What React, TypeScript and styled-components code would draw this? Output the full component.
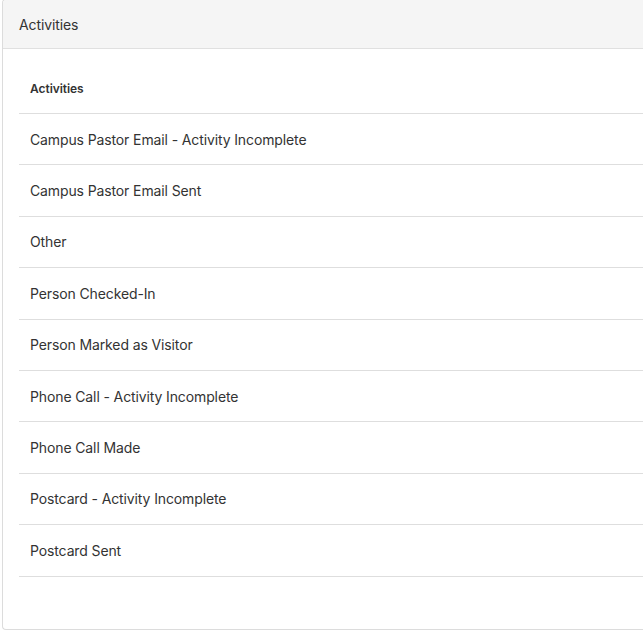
import React from "react"
import styled, { createGlobalStyle } from "styled-components"

const GlobalStyle = createGlobalStyle`
  html, body {
    margin: 0;
    padding: 0;
    background: #ffffff;
    overflow: hidden;
  }
  body {
    font-family: Inter, "Liberation Sans", Arial, sans-serif;
    color: #333333;
    -webkit-font-smoothing: antialiased;
  }
`

const Card = styled.section`
  margin: -1px 0 0 2px;
  border: 1px solid #dcdcdc;
  border-right: none;
  border-radius: 4px 0 0 4px;
  background: #ffffff;
  overflow: hidden;
`

const CardHeader = styled.header`
  height: 48px;
  display: flex;
  align-items: center;
  padding: 0 16px;
  background: #f5f5f5;
  border-bottom: 1px solid #e0e0e0;
  font-size: 14px;
  letter-spacing: -0.1px;
  color: #333333;
`

const CardBody = styled.div`
  padding: 16px 0 16px 16px;
`

const Table = styled.table`
  width: 100%;
  border-collapse: collapse;
  margin-bottom: 36px;
`

const HeadCell = styled.th`
  text-align: left;
  padding: 15px 11px;
  font-size: 12px;
  line-height: 18px;
  font-weight: 600;
  letter-spacing: -0.05px;
  color: #333333;
  border-bottom: 1px solid #dedede;
`

const Cell = styled.td`
  padding: 15.6px 11px 14.4px;
  font-size: 14px;
  line-height: 20.4px;
  letter-spacing: -0.12px;
  color: #333333;
  border-bottom: 1px solid #dedede;
`

const activities = [
  "Campus Pastor Email - Activity Incomplete",
  "Campus Pastor Email Sent",
  "Other",
  "Person Checked-In",
  "Person Marked as Visitor",
  "Phone Call - Activity Incomplete",
  "Phone Call Made",
  "Postcard - Activity Incomplete",
  "Postcard Sent",
]

const App = () => (
  <>
    <GlobalStyle />
    <Card>
      <CardHeader>Activities</CardHeader>
      <CardBody>
        <Table>
          <thead>
            <tr>
              <HeadCell>Activities</HeadCell>
            </tr>
          </thead>
          <tbody>
            {activities.map(name => (
              <tr key={name}>
                <Cell>{name}</Cell>
              </tr>
            ))}
          </tbody>
        </Table>
      </CardBody>
    </Card>
  </>
)

export default App
